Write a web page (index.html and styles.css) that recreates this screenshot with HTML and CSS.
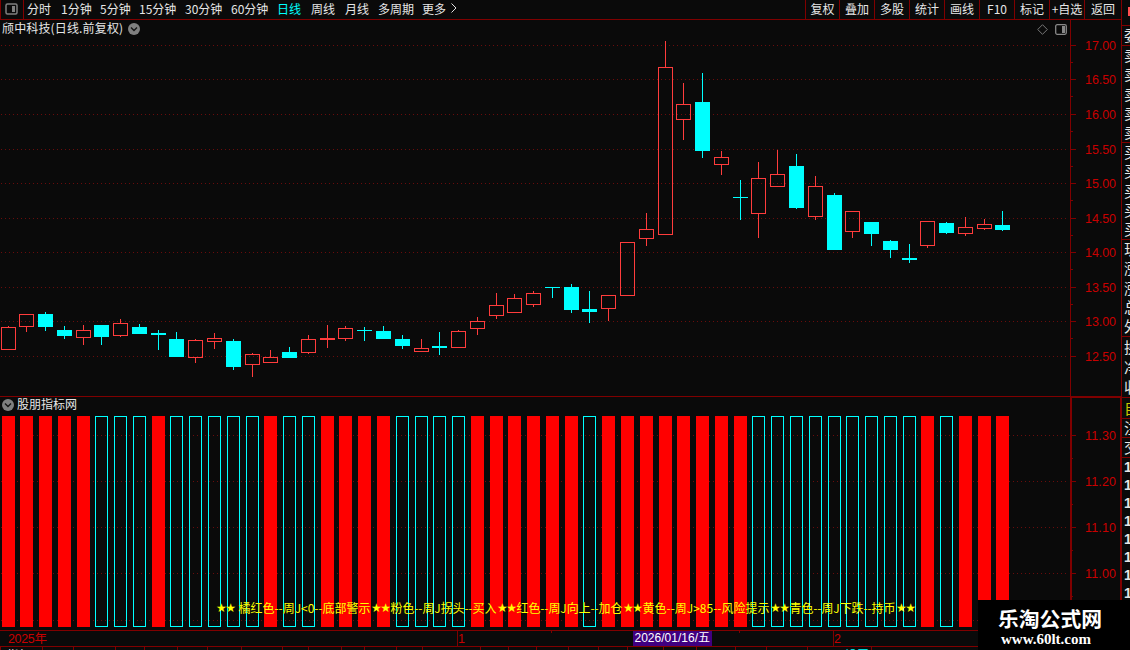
FILE: index.html
```
<!DOCTYPE html>
<html lang="zh-CN">
<head>
    <meta charset="UTF-8">
    <meta name="viewport" content="width=device-width, initial-scale=1.0">
    <title>颀中科技 日线</title>
    <link rel="stylesheet" href="styles.css">
</head>
<body>
    <div class="app">
        <div class="workspace">
            <!-- Toolbar -->
            <div class="toolbar">
                <div class="panel-toggle">
                    <svg width="13" height="12" viewBox="0 0 13 12">
                        <rect x="1" y="1" width="11" height="10" rx="1.5" fill="none" stroke="#808080" stroke-width="1.5"/>
                        <rect x="7" y="3" width="3" height="6" fill="#808080"/>
                    </svg>
                </div>
                <div class="periods">
                    <span>分时</span>
                    <span>1分钟</span>
                    <span>5分钟</span>
                    <span>15分钟</span>
                    <span>30分钟</span>
                    <span>60分钟</span>
                    <span class="active">日线</span>
                    <span>周线</span>
                    <span>月线</span>
                    <span>多周期</span>
                    <span>更多</span>
                    <svg width="8" height="12" viewBox="0 0 8 12"><path d="M1.5 1.5l4.5 4.5-4.5 4.5" fill="none" stroke="#e0e0e0"/></svg>
                </div>
                <div class="tools">
                    <span>复权</span>
                    <span>叠加</span>
                    <span>多股</span>
                    <span>统计</span>
                    <span>画线</span>
                    <span>F10</span>
                    <span>标记</span>
                    <span>+自选</span>
                    <span>返回</span>
                </div>
            </div>

            <!-- Candlestick pane -->
            <div class="pane price-pane">
                <svg id="price-chart" width="1121" height="376" viewBox="0 20 1121 376"></svg>
                <div class="pane-title">
                    <span class="stock-name">颀中科技(日线.前复权)</span>
                    <svg width="12" height="12" viewBox="0 0 12 12"><circle cx="6" cy="6" r="6" fill="#808080"/><path d="M3 4.5l3 3 3-3" fill="none" stroke="#151515" stroke-width="1.4"/></svg>
                </div>
                <div class="pane-icons">
                    <svg width="11" height="11" viewBox="0 0 11 11"><path d="M5.5 .7l4.8 4.8-4.8 4.8L.7 5.5z" fill="none" stroke="#777"/></svg>
                    <svg width="12" height="11" viewBox="0 0 12 11"><rect x=".7" y=".7" width="10.6" height="9.6" rx="1.5" fill="none" stroke="#888" stroke-width="1.3"/><rect x="7" y="2" width="3" height="7" fill="#888"/></svg>
                </div>
            </div>

            <!-- Indicator pane -->
            <div class="pane indicator-pane">
                <svg id="indicator-chart" width="1121" height="234" viewBox="0 396 1121 234"></svg>
                <div class="pane-title indicator-title">
                    <svg width="12" height="12" viewBox="0 0 12 12"><circle cx="6" cy="6" r="6" fill="#808080"/><path d="M3 4.5l3 3 3-3" fill="none" stroke="#151515" stroke-width="1.4"/></svg>
                    <span>股朋指标网</span>
                </div>
            </div>

            <svg id="time-axis" width="1121" height="16" viewBox="0 630 1121 16"></svg>
            <div class="tabs" id="tabs"></div>
        </div>

        <!-- Quote strip, cut off by the window edge -->
        <div class="quotes">
            <div class="quote-head"><i></i></div>
            <div class="quote-group g1"><span>委</span></div>
            <div class="quote-group g5"><span>卖</span><span>卖</span><span>卖</span><span>卖</span><span>卖</span></div>
            <div class="quote-group g5"><span>买</span><span>买</span><span>买</span><span>买</span><span>买</span></div>
            <div class="quote-group g5"><span>现</span><span>涨</span><span>涨</span><span>总</span><span>外</span></div>
            <div class="quote-group g3"><span>换</span><span>净</span><span>收</span></div>
            <div class="quote-group own"><span>自</span></div>
            <div class="quote-group news"><span>注</span></div>
            <div class="quote-group g1"><span>交</span></div>
            <div class="quote-group ticks"><span>1</span><span>1</span><span>1</span><span>1</span><span>1</span><span>1</span><span>1</span><span>1</span></div>
        </div>
    </div>

    <div class="watermark">
        <div class="watermark-name">乐淘公式网</div>
        <div class="watermark-url">www.60lt.com</div>
    </div>

    <script>
        const NS = 'http://www.w3.org/2000/svg';
        const STEP = 18.773;

        // up/down, high, body top, body bottom, low
        const candles = [
            ['u', 326, 327, 350, 350], ['u', 314, 314, 327, 332], ['d', 312, 314, 327, 331],
            ['d', 326, 330, 336, 339], ['u', 325, 330, 338, 345], ['d', 325, 325, 337, 345],
            ['u', 319, 323, 336, 337], ['d', 324, 327, 334, 334], ['d', 330, 333, 335, 350],
            ['d', 332, 339, 357, 357], ['u', 339, 340, 358, 363], ['u', 333, 338, 342, 349],
            ['d', 339, 341, 367, 370], ['u', 353, 354, 365, 377], ['u', 350, 357, 363, 363],
            ['d', 347, 352, 358, 358], ['u', 335, 339, 353, 354], ['u', 325, 338, 340, 348],
            ['u', 326, 328, 339, 341], ['d', 327, 330, 331, 341], ['d', 326, 331, 339, 339],
            ['d', 335, 339, 346, 349], ['u', 339, 348, 352, 352], ['d', 332, 346, 348, 355],
            ['u', 330, 331, 348, 348], ['u', 317, 321, 329, 335], ['u', 293, 305, 316, 319],
            ['u', 294, 298, 313, 313], ['u', 291, 293, 305, 307], ['d', 287, 287, 288, 298],
            ['d', 284, 287, 310, 313], ['d', 291, 309, 312, 323], ['u', 295, 295, 309, 321],
            ['u', 242, 242, 296, 296], ['u', 213, 229, 239, 246], ['u', 41, 67, 235, 235],
            ['u', 83, 104, 120, 140], ['d', 73, 102, 151, 158], ['u', 151, 157, 165, 175],
            ['d', 180, 197, 198, 220], ['u', 162, 178, 214, 238], ['u', 150, 174, 187, 187],
            ['d', 154, 166, 208, 209], ['u', 176, 186, 217, 220], ['d', 193, 195, 250, 250],
            ['u', 211, 211, 232, 238], ['d', 222, 222, 234, 246], ['d', 240, 241, 250, 258],
            ['d', 244, 258, 260, 263], ['u', 221, 221, 246, 248], ['d', 222, 223, 233, 234],
            ['u', 217, 227, 234, 236], ['u', 219, 224, 229, 230], ['d', 211, 225, 230, 231]
        ];
        // r = filled red bar, c = hollow cyan bar
        const bars = 'rrrrrcccrcccccrccrrrrccccrrrrrrcrrrrrrrrcccccccccrcrrr';

        const priceLevels = [[45, '17.00'], [79, '16.50'], [114, '16.00'], [149, '15.50'], [183, '15.00'],
            [218, '14.50'], [252, '14.00'], [287, '13.50'], [321, '13.00'], [356, '12.50']];
        const indicatorLevels = [[435, '11.30'], [481, '11.20'], [527, '11.10'], [573, '11.00'], [620, '']];

        function add(parent, tag, attrs, text) {
            const el = document.createElementNS(NS, tag);
            for (const key in attrs) el.setAttribute(key, attrs[key]);
            if (text) el.textContent = text;
            parent.appendChild(el);
            return el;
        }

        function rect(parent, x, y, width, height, cls) {
            return add(parent, 'rect', { x, y, width, height, class: cls });
        }

        function drawLevels(svg, levels) {
            levels.forEach(([y, label], i) => {
                add(svg, 'line', { x1: 1, x2: 1069, y1: y + 0.5, y2: y + 0.5, class: 'grid-line' });
                rect(svg, 1071, y, 5, 1, 'rule');
                if (i > 0) rect(svg, 1071, Math.floor((levels[i - 1][0] + y) / 2), 2, 1, 'rule');
                if (label) add(svg, 'text', { x: 1085, y: y + 5, textLength: 31, class: 'level' }, label);
            });
        }

        // Price chart
        const price = document.getElementById('price-chart');
        drawLevels(price, priceLevels);
        rect(price, 1070, 20, 1, 376, 'rule');
        candles.forEach(([dir, high, top, bottom, low], i) => {
            const x = Math.floor(1 + STEP * i);
            if (top > high) rect(price, x + 7, high, 1, top - high, dir);
            if (low > bottom) rect(price, x + 7, bottom, 1, low - bottom, dir);
            if (dir === 'd' || bottom - top < 3) {
                rect(price, x, top, 15, bottom - top, dir);
            } else {
                rect(price, x + 0.5, top + 0.5, 14, bottom - top - 1, 'u-body');
            }
        });

        // Indicator chart
        const indicator = document.getElementById('indicator-chart');
        drawLevels(indicator, indicatorLevels);
        rect(indicator, 0, 396, 1121, 1, 'rule');
        rect(indicator, 1070, 396, 51, 2, 'rule');
        rect(indicator, 1070, 396, 2, 234, 'rule');
        rect(indicator, 1120, 396, 1, 234, 'rule');
        [...bars].forEach((type, i) => {
            const x = Math.floor(1 + STEP * i) + 1;
            if (type === 'r') rect(indicator, x, 416, 13, 211, 'bar-red');
            else rect(indicator, x + 0.5, 416.5, 12, 210, 'bar-cyan');
        });
        [217, 372, 498, 624, 771, 897].forEach(x => {
            add(indicator, 'text', { x: x - 1, y: 612, textLength: 20, class: 'star' }, '★★');
        });
        [[239, 132, '橘红色--周J<0--底部警示'], [391, 106, '粉色--周J拐头--买入'], [517, 106, '红色--周J向上--加仓'],
            [643, 127, '黄色--周J>85--风险提示'], [790, 106, '青色--周J下跌--持币']].forEach(([x, w, text]) => {
            add(indicator, 'text', { x: x - 0.5, y: 612.5, textLength: w, class: 'note' }, text);
        });

        // Time axis
        const axis = document.getElementById('time-axis');
        rect(axis, 0, 630, 1121, 1, 'rule');
        rect(axis, 457, 630, 1, 16, 'rule');
        rect(axis, 833, 630, 1, 16, 'rule');
        rect(axis, 551, 630, 1, 3, 'rule');
        rect(axis, 739, 630, 1, 3, 'rule');
        add(axis, 'text', { x: 8, y: 643, textLength: 39, class: 'level' }, '2025年');
        add(axis, 'text', { x: 458, y: 643, class: 'level' }, '1');
        add(axis, 'text', { x: 834, y: 643, class: 'level' }, '2');
        rect(axis, 633, 631, 79, 15, 'date-box');
        add(axis, 'text', { x: 634.5, y: 642, textLength: 75.5, class: 'date-text' }, '2026/01/16/五');

        // Bottom tabs, only their top edge is on screen
        const tabEnds = [42, 73, 115, 144, 177, 207, 241, 282, 308, 341, 364, 396, 422, 480, 508, 536,
            568, 598, 627, 663, 696, 735, 766, 807, 871];
        const tabs = document.getElementById('tabs');
        tabEnds.forEach((end, i) => {
            const tab = document.createElement('span');
            tab.style.width = (end - (i ? tabEnds[i - 1] : 0)) + 'px';
            tabs.appendChild(tab);
        });
        tabs.children[0].textContent = '指标';
        tabs.children[24].textContent = '设置';
        tabs.children[24].className = 'cyan';
    </script>
</body>
</html>
```
FILE: styles.css
```
* {
    box-sizing: border-box;
    margin: 0;
    padding: 0;
}

body {
    width: 1130px;
    height: 650px;
    overflow: hidden;
    background-color: #0a0a0a;
    color: #e6e6e6;
    font-family: "Noto Sans CJK SC", sans-serif;
    font-size: 12px;
    position: relative;
}

svg {
    display: block;
}

.app {
    display: grid;
    grid-template-columns: 1121px 9px;
    height: 650px;
}

.workspace {
    display: flex;
    flex-direction: column;
    height: 650px;
    overflow: hidden;
}

/* Toolbar */
.toolbar {
    display: flex;
    height: 20px;
    flex: none;
    line-height: 17px;
    border-left: 1px solid #800000;
    border-bottom: 1px solid #800000;
}

.panel-toggle {
    width: 23px;
    padding: 3px 0 0 4px;
    border-right: 1px solid #800000;
}

.periods {
    flex: 1;
    display: grid;
    grid-template-columns: 34px 39px 39px 46px 46px 46px 34px 34px 33px 44px 28px 10px;
    padding-left: 3px;
    white-space: nowrap;
}

.periods svg {
    margin-top: 2px;
}

.periods .active {
    color: #00ffff;
}

.tools {
    display: grid;
    grid-template-columns: 34px repeat(7, 35px) 37px;
    text-align: center;
    white-space: nowrap;
}

.tools span {
    border-left: 1px solid #800000;
}

/* Panes */
.pane {
    position: relative;
    flex: none;
}

.price-pane {
    height: 376px;
}

.indicator-pane {
    height: 234px;
}

.pane-title {
    position: absolute;
    left: 2px;
    top: 0;
    display: flex;
    align-items: center;
    gap: 5px;
    height: 18px;
    line-height: 16px;
}

.pane-title span {
    padding-bottom: 2px;
}

.stock-name {
    letter-spacing: 0.15px;
}

.indicator-title {
    gap: 3px;
}

.pane-icons {
    position: absolute;
    left: 1037px;
    top: 4px;
    display: flex;
    gap: 7px;
}

/* Chart */
#price-chart rect,
#indicator-chart rect,
#time-axis rect,
.grid-line {
    shape-rendering: crispEdges;
}

.rule {
    fill: #800000;
}

.grid-line {
    stroke: #6a0c0c;
    stroke-dasharray: 1 3;
}

.level {
    fill: #c80000;
    font-family: "Liberation Sans", "Noto Sans CJK SC", sans-serif;
    font-size: 12.5px;
}

.u {
    fill: #ff3c3c;
}

.d {
    fill: #00ffff;
}

.u-body {
    fill: none;
    stroke: #ff3c3c;
}

.bar-red {
    fill: #ff0000;
}

.bar-cyan {
    fill: none;
    stroke: #00ffff;
}

.note {
    fill: #ffff00;
    font-size: 12px;
}

.star {
    fill: #ffff00;
    font-family: "DejaVu Sans", sans-serif;
    font-size: 12px;
}

.date-box {
    fill: #400080;
}

.date-text {
    fill: #ffffff;
    font-family: "Liberation Sans", "Noto Sans CJK SC", sans-serif;
    font-size: 12px;
}

#time-axis {
    flex: none;
}

.tabs {
    display: flex;
    height: 4px;
    overflow: hidden;
    border-top: 1px solid #800000;
    border-left: 1px solid #800000;
}

.tabs span {
    flex: none;
    height: 4px;
    padding-left: 6px;
    line-height: 15px;
    border-right: 1px solid #800000;
}

.tabs .cyan {
    padding-left: 37px;
    color: #00ffff;
}

/* Quote strip */
.quotes {
    height: 650px;
    overflow: hidden;
    border-left: 1px solid #800000;
    font-size: 15px;
}

.quote-head {
    height: 25px;
    padding: 7px 0 0 6px;
}

.quote-head i {
    display: block;
    width: 2px;
    height: 9px;
    background-color: #ff5050;
}

.quote-group {
    display: flex;
    flex-direction: column;
    border-top: 1px solid #800000;
    overflow: hidden;
}

.quote-group span {
    display: flex;
    flex: 1;
    align-items: center;
    width: 20px;
    padding: 0 0 1px 2px;
    line-height: 14px;
}

.g1 {
    height: 20px;
}

.g5 {
    height: 97px;
}

.g3 {
    height: 61px;
}

.own {
    height: 21px;
    color: #c8c800;
}

.news {
    height: 19px;
}

.ticks {
    height: 145px;
    font-family: "Liberation Sans", sans-serif;
    font-weight: bold;
    font-size: 14px;
}

/* Watermark */
.watermark {
    position: absolute;
    left: 978px;
    top: 600px;
    width: 152px;
    height: 50px;
    padding: 5px 0 0 20px;
    background-color: #000000;
    color: #ffffff;
    white-space: nowrap;
}

.watermark-name {
    font-size: 20.8px;
    font-weight: bold;
    line-height: 26px;
}

.watermark-url {
    padding: 1px 0 0 3px;
    font-family: "Liberation Serif", serif;
    font-size: 15px;
    font-weight: bold;
    line-height: 15px;
}
```
